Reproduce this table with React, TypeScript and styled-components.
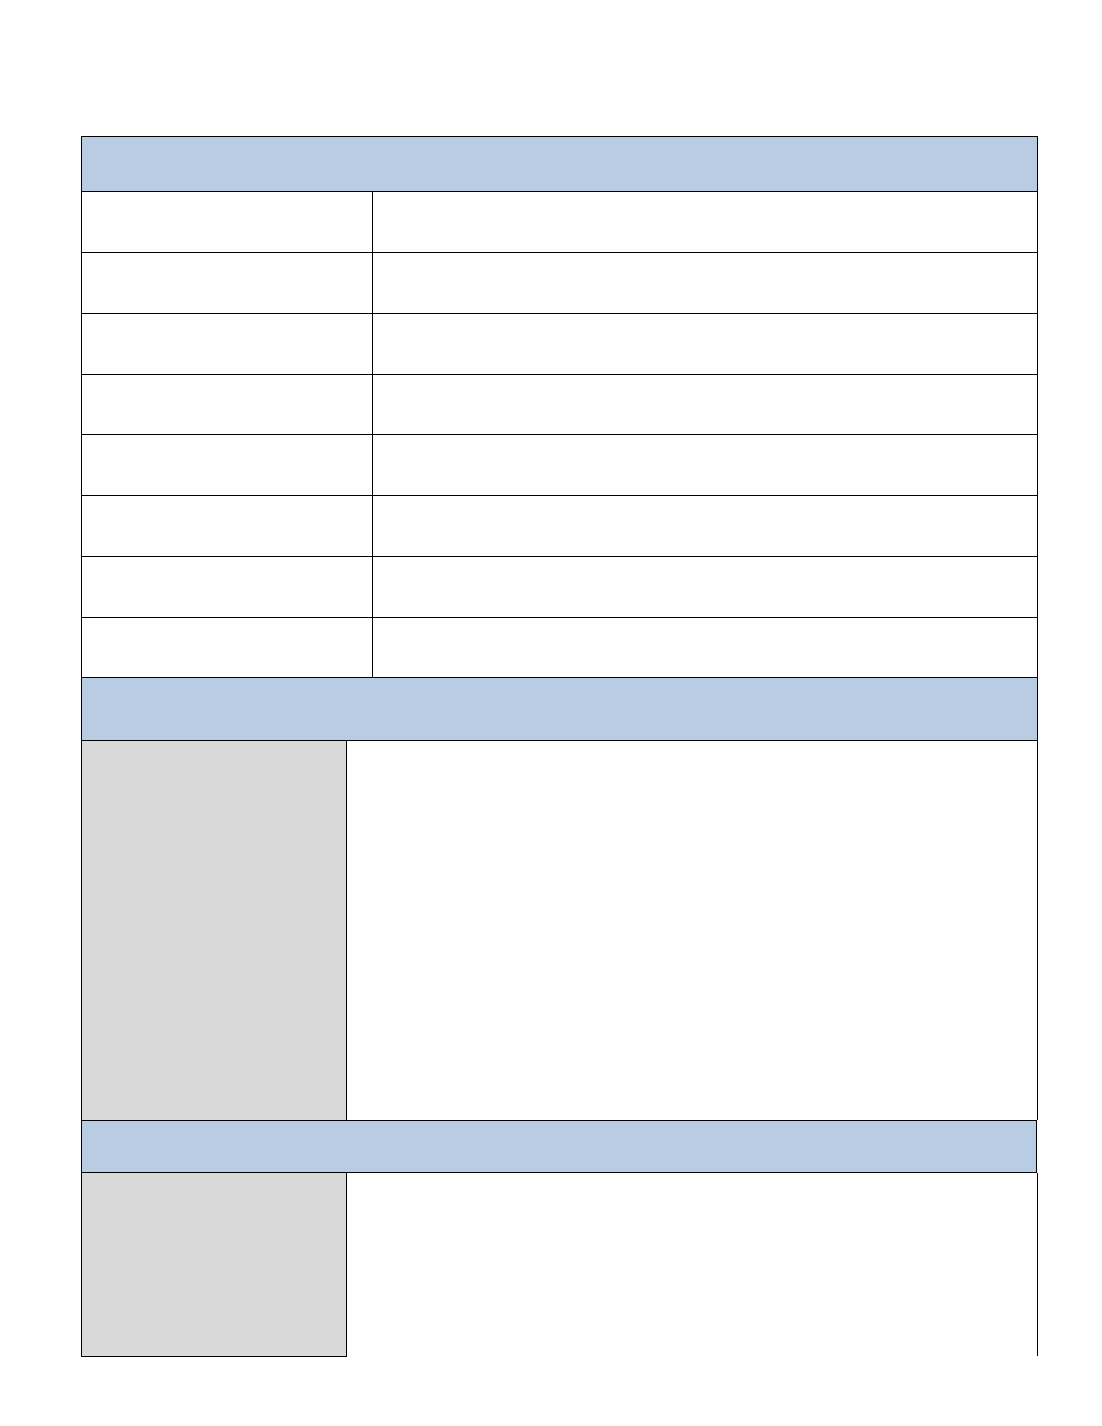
import React from "react";
import styled, { createGlobalStyle } from "styled-components";

const Global = createGlobalStyle`
  html, body { margin: 0; padding: 0; background: #ffffff; }
  body { font-family: "Liberation Sans", Arial, sans-serif; }
  * { box-sizing: border-box; }
`;

const LINE = "1px solid #000";
const BLUE = "#b8cce4";
const GRAY = "#d9d9d9";

const Sheet = styled.div`
  margin: 136px 0 0 81px;
  width: 957px;
  display: flex;
  flex-direction: column;
`;

const Band = styled.div<{ $h: number; $top?: boolean; $narrow?: boolean }>`
  height: ${(p) => p.$h}px;
  width: ${(p) => (p.$narrow ? 956 : 957)}px;
  background: ${BLUE};
  border-left: ${LINE};
  border-right: ${LINE};
  border-bottom: ${LINE};
  border-top: ${(p) => (p.$top ? LINE : "none")};
`;

const Row = styled.div<{ $h: number }>`
  display: grid;
  grid-template-columns: 291px 1fr;
  height: ${(p) => p.$h}px;
  border-left: ${LINE};
  border-right: ${LINE};
  border-bottom: ${LINE};
`;

const LabelCell = styled.div`
  border-right: ${LINE};
`;

const ValueCell = styled.div``;

const Split = styled.div<{ $h: number; $closed?: boolean }>`
  display: grid;
  grid-template-columns: 266px 1fr;
  align-items: start;
  height: ${(p) => p.$h}px;
`;

const GrayCell = styled.div<{ $h: number; $bottom?: boolean }>`
  height: ${(p) => p.$h}px;
  background: ${GRAY};
  border-left: ${LINE};
  border-right: ${LINE};
  border-bottom: ${(p) => (p.$bottom ? LINE : "none")};
`;

const OpenCell = styled.div<{ $h: number }>`
  height: ${(p) => p.$h}px;
  border-right: ${LINE};
`;

const rowHeights = [61, 61, 61, 60, 61, 61, 61, 60];

export default function App() {
  return (
    <>
      <Global />
      <Sheet>
        <Band $h={56} $top />
        {rowHeights.map((h, i) => (
          <Row key={i} $h={h}>
            <LabelCell />
            <ValueCell />
          </Row>
        ))}
        <Band $h={63} />
        <Split $h={379}>
          <GrayCell $h={379} />
          <OpenCell $h={379} />
        </Split>
        <Band $h={53} $top $narrow />
        <Split $h={184}>
          <GrayCell $h={184} $bottom />
          <OpenCell $h={183} />
        </Split>
      </Sheet>
    </>
  );
}
